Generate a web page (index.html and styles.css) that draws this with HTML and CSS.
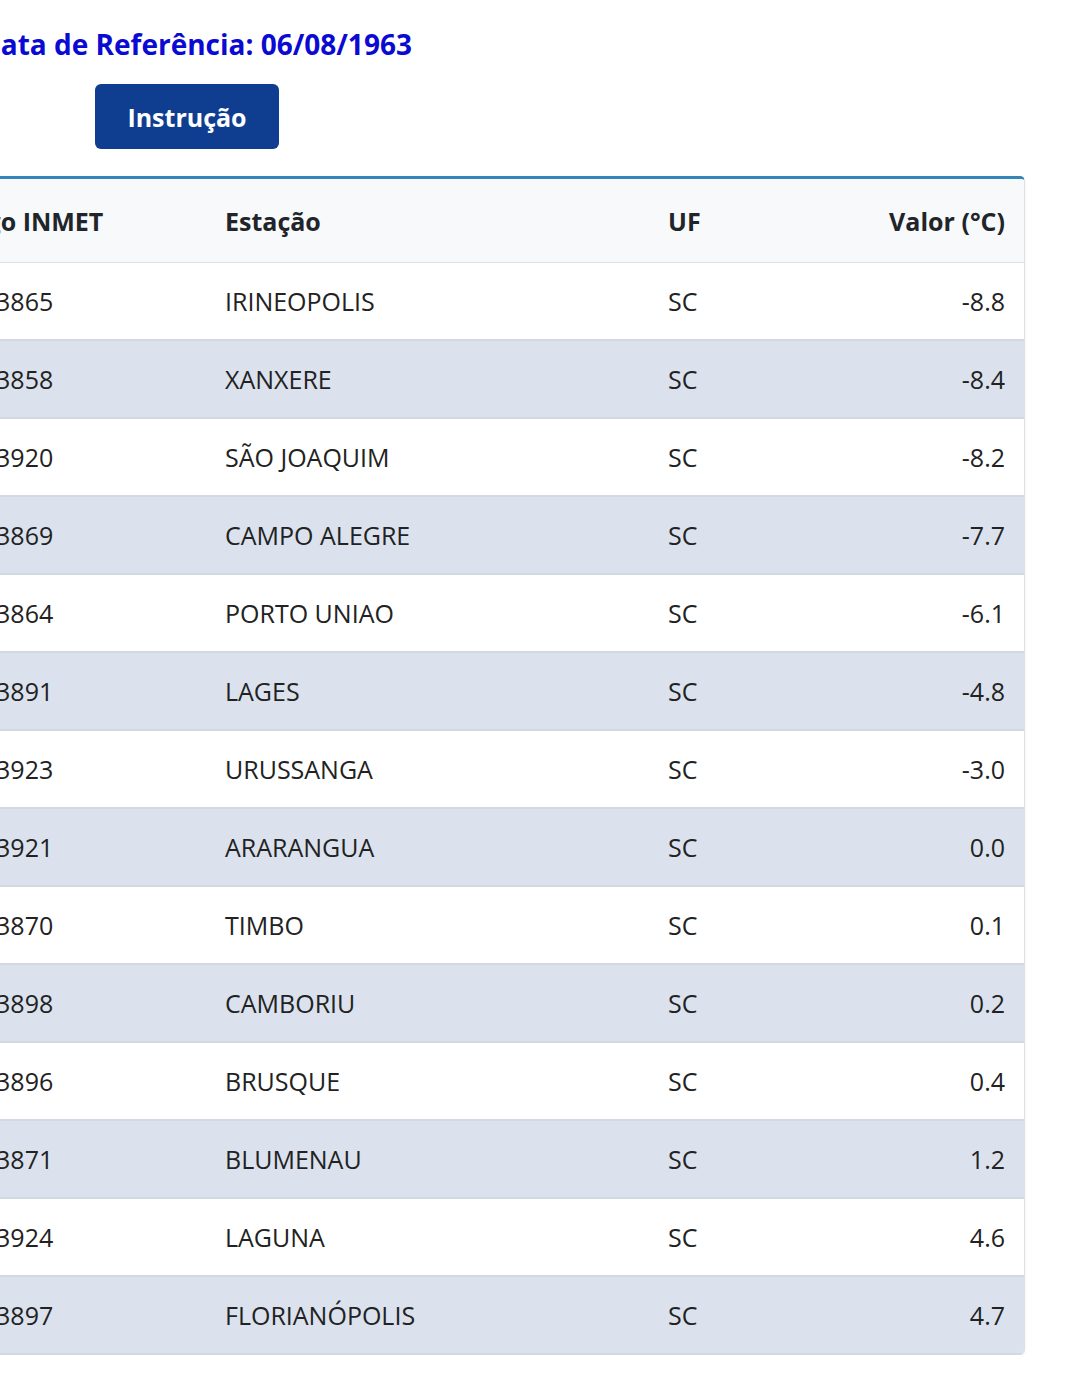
FILE: index.html
```html
<!DOCTYPE html>
<html lang="pt-BR">
<head>
<meta charset="utf-8">
<title>Temperatura mínima</title>
<link rel="stylesheet" href="styles.css">
</head>
<body>
<div class="page">
  <h2 class="ref-date">Data de Referência: 06/08/1963</h2>
  <div class="actions">
    <button class="btn-instr" type="button">Instrução</button>
  </div>
  <div class="table-card">
    <table class="data-table">
      <colgroup>
        <col class="c-code"><col class="c-name"><col class="c-uf"><col class="c-val">
      </colgroup>
      <thead>
        <tr><th class="code">Código INMET</th><th>Estação</th><th>UF</th><th class="val">Valor (°C)</th></tr>
      </thead>
      <tbody>
        <tr><td class="code">83865</td><td>IRINEOPOLIS</td><td>SC</td><td class="val">-8.8</td></tr>
        <tr><td class="code">83858</td><td>XANXERE</td><td>SC</td><td class="val">-8.4</td></tr>
        <tr><td class="code">83920</td><td>SÃO JOAQUIM</td><td>SC</td><td class="val">-8.2</td></tr>
        <tr><td class="code">83869</td><td>CAMPO ALEGRE</td><td>SC</td><td class="val">-7.7</td></tr>
        <tr><td class="code">83864</td><td>PORTO UNIAO</td><td>SC</td><td class="val">-6.1</td></tr>
        <tr><td class="code">83891</td><td>LAGES</td><td>SC</td><td class="val">-4.8</td></tr>
        <tr><td class="code">83923</td><td>URUSSANGA</td><td>SC</td><td class="val">-3.0</td></tr>
        <tr><td class="code">83921</td><td>ARARANGUA</td><td>SC</td><td class="val">0.0</td></tr>
        <tr><td class="code">83870</td><td>TIMBO</td><td>SC</td><td class="val">0.1</td></tr>
        <tr><td class="code">83898</td><td>CAMBORIU</td><td>SC</td><td class="val">0.2</td></tr>
        <tr><td class="code">83896</td><td>BRUSQUE</td><td>SC</td><td class="val">0.4</td></tr>
        <tr><td class="code">83871</td><td>BLUMENAU</td><td>SC</td><td class="val">1.2</td></tr>
        <tr><td class="code">83924</td><td>LAGUNA</td><td>SC</td><td class="val">4.6</td></tr>
        <tr><td class="code">83897</td><td>FLORIANÓPOLIS</td><td>SC</td><td class="val">4.7</td></tr>
      </tbody>
    </table>
  </div>
</div>
</body>
</html>
```

FILE: styles.css
```css
html, body {
  margin: 0;
  padding: 0;
  background: #ffffff;
  overflow: hidden;
}

body {
  font-family: "Open Sans", "Noto Sans", "Liberation Sans", sans-serif;
  color: #212529;
}

.page {
  margin-left: -170px;
  width: 1195px;
  padding-top: 24px;
}

.ref-date {
  margin: 0 0 0 150px;
  font-size: 28px;
  line-height: 40px;
  font-weight: 700;
  color: #0a0ad2;
}

.actions {
  padding-left: 265px;
  margin-top: 20px;
}

.btn-instr {
  display: block;
  width: 184px;
  height: 65px;
  border: none;
  border-radius: 6px;
  background: #0f3e91;
  color: #ffffff;
  font-family: inherit;
  font-size: 25px;
  font-weight: 700;
}

.table-card {
  margin-top: 27px;
  border-top: 3px solid #3586b8;
  border-right: 1px solid #dde1e6;
  border-radius: 0 5px 5px 0;
  overflow: hidden;
  box-shadow: 0 1px 3px rgba(0, 0, 0, 0.06);
}

.data-table {
  width: 100%;
  border-collapse: collapse;
  table-layout: fixed;
  font-size: 25px;
}

.c-code { width: 375px; }
.c-name { width: 443px; }
.c-uf { width: 102px; }
.c-val { width: 275px; }

.data-table th {
  height: 83px;
  padding: 0 20px;
  text-align: left;
  font-weight: 700;
  background: #f7f9fb;
  border-bottom: 1px solid #dee2e6;
  color: #212529;
}

.data-table td {
  height: 76px;
  padding: 0 20px;
  text-align: left;
  font-weight: 400;
  color: #222;
  border-bottom: 2px solid #d3d9e2;
}

.data-table tbody tr:nth-child(odd) td { background: #ffffff; }
.data-table tbody tr:nth-child(even) td { background: #dbe2ee; }

.data-table .code { text-align: center; }
.data-table .val { text-align: right; }
```
